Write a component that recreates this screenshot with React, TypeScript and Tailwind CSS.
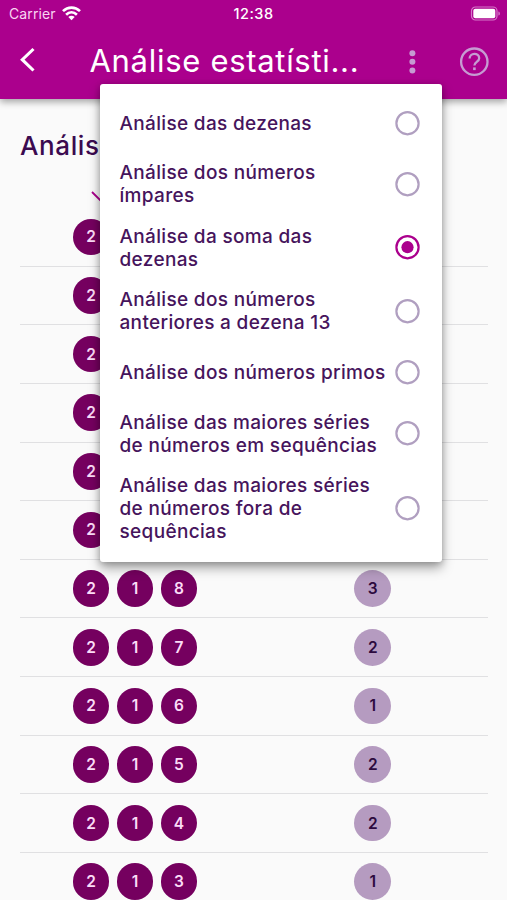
import clsx from "clsx";
import { useState } from "react";

const options = [
    { lines: ["Análise das dezenas"], height: "h-[58.6px]" },
    { lines: ["Análise dos números", "ímpares"], height: "h-[63.5px]" },
    { lines: ["Análise da soma das", "dezenas"], height: "h-[63.5px]" },
    { lines: ["Análise dos números", "anteriores a dezena 13"], height: "h-[63.5px]" },
    { lines: ["Análise dos números primos"], height: "h-[58.6px]" },
    { lines: ["Análise das maiores séries", "de números em sequências"], height: "h-[63.5px]" },
    { lines: ["Análise das maiores séries", "de números fora de", "sequências"], height: "h-[87px]" },
];

const rows = [
    { sum: "224", count: 1 },
    { sum: "223", count: 1 },
    { sum: "222", count: 1 },
    { sum: "221", count: 2 },
    { sum: "220", count: 2 },
    { sum: "219", count: 1 },
    { sum: "218", count: 3 },
    { sum: "217", count: 2 },
    { sum: "216", count: 1 },
    { sum: "215", count: 2 },
    { sum: "214", count: 2 },
    { sum: "213", count: 1 },
];

function StatusBar() {
    return (
        <div className="flex h-7 items-center text-[14px]">
            <div className="flex w-[200px] items-center gap-[5px] pl-[9px] text-[#f9d5f2]">
                <span className="-mt-[2px] w-[48px] tracking-[0.1px]">Carrier</span>
                <svg className="-mt-px" width="19" height="15" viewBox="0 0 19 15" fill="none" stroke="#fff" strokeWidth="2.7">
                    <path d="M1 5.1C5.9.4 13.1.4 18 5.1" />
                    <path d="M4.1 8.7c3.2-3 7.6-3 10.8 0" />
                    <path d="M9.5 14.2 6.3 11c1.8-1.7 4.6-1.7 6.4 0z" fill="#fff" stroke="none" />
                </svg>
            </div>
            <span className="w-[107px] text-center text-[14.5px] font-medium tracking-[0.5px] text-white">12:38</span>
            <svg className="ml-[163px] -mt-[2px]" width="31" height="15" viewBox="0 0 31 15">
                <rect x="1.5" y="1" width="25.5" height="13" rx="4" fill="none" stroke="#d678c9" strokeWidth="1.2" />
                <rect x="3.3" y="2.8" width="22" height="9.4" rx="2" fill="#fff" />
                <path d="M28.4 5.4c2 .6 2 3.6 0 4.2z" fill="#d678c9" />
            </svg>
        </div>
    );
}

function Ball({ value, light }: { value: string | number; light?: boolean }) {
    return (
        <span
            className={clsx(
                "flex size-[36.6px] items-center justify-center rounded-full text-[15.5px] font-semibold",
                light ? "bg-[#b59bc0] text-[#2c0a3e]" : "bg-[#75005f] text-[#fbdcf7]"
            )}
        >
            {value}
        </span>
    );
}

export default function App() {
    const [selected, setSelected] = useState(2);

    return (
        <div className="relative h-[900px] w-[507px] overflow-hidden bg-[#fafafa] font-['Inter',sans-serif]">
            <header className="relative h-[98.5px] bg-[#ab008d] shadow-[0_3px_7px_rgba(0,0,0,0.35)]">
                <StatusBar />
                <div className="flex h-[66px] items-center text-white">
                    <svg className="ml-[18px] -mt-[2px]" width="20" height="26" viewBox="0 0 20 26" fill="none" stroke="#fff" strokeWidth="3.1">
                        <path d="M15.5 2 4.3 12.7l11.2 10.8" />
                    </svg>
                    <h1 className="-mt-px ml-[51.5px] w-[310.5px] text-[31px] leading-9 tracking-[0.7px] whitespace-nowrap">Análise estatísti...</h1>
                    <svg width="24" height="30" viewBox="0 0 24 30" fill="#c69bd2">
                        <circle cx="12.4" cy="7.3" r="3" />
                        <circle cx="12.4" cy="15.8" r="3" />
                        <circle cx="12.4" cy="24.4" r="3" />
                    </svg>
                    <svg className="mt-px ml-[35px]" width="30" height="30" viewBox="0 0 30 30" fill="none" stroke="#c69bd2" strokeWidth="2.3">
                        <circle cx="15.3" cy="14.7" r="13.2" />
                        <path d="M10.6 11.5c0-6.1 9.6-6.1 9.6-.3 0 3.6-4.8 3.8-4.8 7.2" />
                        <path d="M15.4 20.4v2.7" strokeWidth="2.6" />
                    </svg>
                </div>
            </header>

            <main>
                <h2 className="mt-[31px] ml-5 text-[26px] leading-8 font-medium tracking-[0.6px] whitespace-nowrap text-[#3b0a50]">Análise da soma das dezenas</h2>
                <svg className="mt-[19px] ml-[90px]" width="24" height="26" viewBox="0 0 24 26" fill="none" stroke="#ab008d" strokeWidth="1.8">
                    <path d="m2 11 9 9 9-9M11 20V2" />
                </svg>
                <ul className="mx-[19.5px] mt-[1.6px]">
                    {rows.map((row) => (
                        <li key={row.sum} className="flex h-[58.63px] items-center border-b-[1.3px] border-[#e0e0e2] pl-[53.2px]">
                            <div className="flex w-[281.8px] gap-[7.4px]">
                                {row.sum.split("").map((digit, i) => (
                                    <Ball key={i} value={digit} />
                                ))}
                            </div>
                            <Ball value={row.count} light />
                        </li>
                    ))}
                </ul>
            </main>

            <div className="absolute top-[84px] left-[99.5px] w-[342px] rounded-[3px] bg-white pt-[10.1px] pb-[9.6px] shadow-[0_6px_12px_rgba(0,0,0,0.35),0_1px_6px_rgba(0,0,0,0.2)]">
                {options.map((option, index) => (
                    <button
                        key={index}
                        onClick={() => setSelected(index)}
                        className={clsx("flex w-full items-center justify-between pr-[21.5px] pl-5 text-left", option.height)}
                    >
                        <span className="text-[19px] leading-[23px] font-medium tracking-[0.33px] whitespace-nowrap text-[#46145c]">
                            {option.lines.map((line) => (
                                <span key={line} className="block">{line}</span>
                            ))}
                        </span>
                        <svg className="shrink-0" width="25" height="25" viewBox="0 0 25 25" fill="none" stroke={selected === index ? "#ab008d" : "#b09fc0"} strokeWidth="2.2">
                            <circle cx="12.5" cy="12.2" r="11.1" />
                            {selected === index && <circle cx="12.5" cy="12.2" r="6.1" fill="#ab008d" stroke="none" />}
                        </svg>
                    </button>
                ))}
            </div>
        </div>
    );
}
